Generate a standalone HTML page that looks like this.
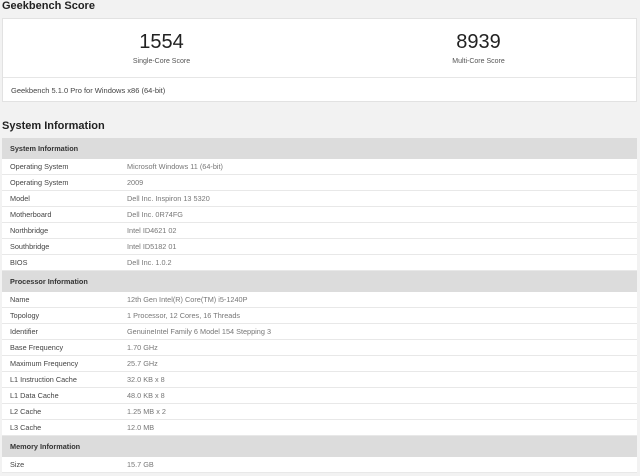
<!DOCTYPE html><html><head><style>
body{margin:0;background:#f2f2f2;font-family:"Liberation Sans",sans-serif;width:640px;height:476px;overflow:hidden;position:relative;color:#333}
.t{position:absolute;left:2px;font-weight:bold;font-size:11px;color:#222}
.card{position:absolute;left:2px;width:635px;top:18px;height:84px;background:#fff;border:1px solid #e2e2e2;box-sizing:border-box}
.sc{position:absolute;top:0;width:317px;text-align:center}
.sc .n{font-size:20px;margin-top:12px;color:#222;line-height:22px}
.sc .l{font-size:7px;color:#555;margin-top:5px}
.div{position:absolute;left:0;right:0;top:58px;border-top:1px solid #e6e6e6}
.ver{position:absolute;left:8px;top:67px;font-size:7.5px;color:#444}
table{position:absolute;left:2px;top:138px;width:635px;border-collapse:collapse;font-size:7.3px;background:#fff}
td{height:15px;padding:0 0 0 8px;border-bottom:1px solid #e8e8e8;line-height:15px}
td.v{color:#777;padding-left:0}
td.k{width:117px;color:#444}
tr.h td{background:#dcdcdc;font-weight:bold;color:#333;height:21px;border-bottom:none}
</style></head><body>
<div class="t" style="top:0">Geekbench Score</div>
<div class="card">
<div class="sc" style="left:0"><div class="n">1554</div><div class="l">Single-Core Score</div></div>
<div class="sc" style="left:317px"><div class="n">8939</div><div class="l">Multi-Core Score</div></div>
<div class="div"></div>
<div class="ver">Geekbench 5.1.0 Pro for Windows x86 (64-bit)</div>
</div>
<div class="t" style="top:120px">System Information</div>
<table>
<tr class="h"><td colspan="2">System Information</td></tr>
<tr><td class="k">Operating System</td><td class="v">Microsoft Windows 11 (64-bit)</td></tr>
<tr><td class="k">Operating System</td><td class="v">2009</td></tr>
<tr><td class="k">Model</td><td class="v">Dell Inc. Inspiron 13 5320</td></tr>
<tr><td class="k">Motherboard</td><td class="v">Dell Inc. 0R74FG</td></tr>
<tr><td class="k">Northbridge</td><td class="v">Intel ID4621 02</td></tr>
<tr><td class="k">Southbridge</td><td class="v">Intel ID5182 01</td></tr>
<tr><td class="k">BIOS</td><td class="v">Dell Inc. 1.0.2</td></tr>
<tr class="h"><td colspan="2">Processor Information</td></tr>
<tr><td class="k">Name</td><td class="v">12th Gen Intel(R) Core(TM) i5-1240P</td></tr>
<tr><td class="k">Topology</td><td class="v">1 Processor, 12 Cores, 16 Threads</td></tr>
<tr><td class="k">Identifier</td><td class="v">GenuineIntel Family 6 Model 154 Stepping 3</td></tr>
<tr><td class="k">Base Frequency</td><td class="v">1.70 GHz</td></tr>
<tr><td class="k">Maximum Frequency</td><td class="v">25.7 GHz</td></tr>
<tr><td class="k">L1 Instruction Cache</td><td class="v">32.0 KB x 8</td></tr>
<tr><td class="k">L1 Data Cache</td><td class="v">48.0 KB x 8</td></tr>
<tr><td class="k">L2 Cache</td><td class="v">1.25 MB x 2</td></tr>
<tr><td class="k">L3 Cache</td><td class="v">12.0 MB</td></tr>
<tr class="h"><td colspan="2">Memory Information</td></tr>
<tr><td class="k">Size</td><td class="v">15.7 GB</td></tr>
</table>
</body></html>
